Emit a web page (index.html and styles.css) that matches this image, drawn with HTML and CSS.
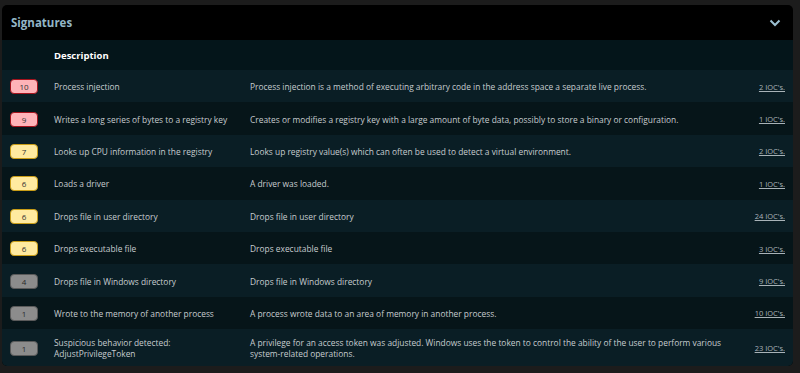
FILE: index.html
```html
<!DOCTYPE html>
<html lang="en">
<head>
    <meta charset="UTF-8">
    <title>Signatures</title>
    <link rel="stylesheet" href="styles.css">
</head>
<body>
    <div class="card">
        <div class="card-header">
            <h2>Signatures</h2>
            <svg class="chevron" width="12" height="8" viewBox="0 0 12 8">
                <path d="M1.5 1.5 L6 6 L10.5 1.5" fill="none" stroke="#9cc0d2" stroke-width="2"/>
            </svg>
        </div>
        <table class="sig-table">
            <colgroup>
                <col class="col-score">
                <col class="col-name">
                <col class="col-desc">
                <col class="col-ioc">
            </colgroup>
            <thead>
                <tr>
                    <th></th>
                    <th>Description</th>
                    <th></th>
                    <th></th>
                </tr>
            </thead>
            <tbody>
                <tr>
                    <td><span class="badge red">10</span></td>
                    <td>Process injection</td>
                    <td>Process injection is a method of executing arbitrary code in the address space a separate live process.</td>
                    <td class="ioc"><a href="#">2 IOC's.</a></td>
                </tr>
                <tr>
                    <td><span class="badge red">9</span></td>
                    <td>Writes a long series of bytes to a registry key</td>
                    <td>Creates or modifies a registry key with a large amount of byte data, possibly to store a binary or configuration.</td>
                    <td class="ioc"><a href="#">1 IOC's.</a></td>
                </tr>
                <tr>
                    <td><span class="badge yellow">7</span></td>
                    <td>Looks up CPU information in the registry</td>
                    <td>Looks up registry value(s) which can often be used to detect a virtual environment.</td>
                    <td class="ioc"><a href="#">2 IOC's.</a></td>
                </tr>
                <tr>
                    <td><span class="badge yellow">6</span></td>
                    <td>Loads a driver</td>
                    <td>A driver was loaded.</td>
                    <td class="ioc"><a href="#">1 IOC's.</a></td>
                </tr>
                <tr>
                    <td><span class="badge yellow">6</span></td>
                    <td>Drops file in user directory</td>
                    <td>Drops file in user directory</td>
                    <td class="ioc"><a href="#">24 IOC's.</a></td>
                </tr>
                <tr>
                    <td><span class="badge yellow">6</span></td>
                    <td>Drops executable file</td>
                    <td>Drops executable file</td>
                    <td class="ioc"><a href="#">3 IOC's.</a></td>
                </tr>
                <tr>
                    <td><span class="badge gray">4</span></td>
                    <td>Drops file in Windows directory</td>
                    <td>Drops file in Windows directory</td>
                    <td class="ioc"><a href="#">9 IOC's.</a></td>
                </tr>
                <tr>
                    <td><span class="badge gray">1</span></td>
                    <td>Wrote to the memory of another process</td>
                    <td>A process wrote data to an area of memory in another process.</td>
                    <td class="ioc"><a href="#">10 IOC's.</a></td>
                </tr>
                <tr>
                    <td><span class="badge gray">1</span></td>
                    <td>Suspicious behavior detected: AdjustPrivilegeToken</td>
                    <td>A privilege for an access token was adjusted. Windows uses the token to control the ability of the user to perform various system-related operations.</td>
                    <td class="ioc"><a href="#">23 IOC's.</a></td>
                </tr>
            </tbody>
        </table>
    </div>
</body>
</html>
```

FILE: styles.css
```css
body {
    margin: 0;
    padding: 5px 0 0 2px;
    background-color: #1c1c1c;
    font-family: "Open Sans", "Noto Sans", sans-serif;
    font-size: 8.4px;
    color: #c6cccf;
}
.card {
    width: 791px;
    background-color: #000;
    border-radius: 5px;
    overflow: hidden;
}
.card-header {
    display: flex;
    align-items: center;
    justify-content: space-between;
    height: 35px;
    padding: 0 12px 0 9px;
}
.card-header h2 {
    margin: 0;
    font-size: 11.5px;
    font-weight: bold;
    color: #93b6c7;
}
.chevron {
    display: block;
}
.sig-table {
    width: 100%;
    border-collapse: collapse;
    table-layout: fixed;
}
.col-score { width: 52px; }
.col-name { width: 196px; }
.col-desc { width: 492px; }
.sig-table th {
    height: 30px;
    background-color: #04151a;
    color: #fff;
    font-weight: bold;
    font-size: 9.5px;
    text-align: left;
    padding: 0;
}
.sig-table td {
    height: 32.4px;
    box-sizing: border-box;
    padding: 1px 0 0 0;
    vertical-align: middle;
    line-height: 11px;
}
.sig-table td:first-child {
    padding-left: 8px;
}
.sig-table tbody tr:nth-child(odd) {
    background-color: #0a1e25;
}
.sig-table tbody tr:nth-child(even) {
    background-color: #061519;
}
.sig-table tbody tr:last-child td {
    height: 37px;
}
.badge {
    display: block;
    width: 26px;
    height: 13px;
    line-height: 13px;
    border-radius: 4px;
    text-align: center;
    font-size: 8px;
    color: #333;
}
.badge.red {
    background-color: #ffb3b8;
    border: 1px solid #a4121c;
}
.badge.yellow {
    background-color: #ffeaa0;
    border: 1px solid #c89c16;
}
.badge.gray {
    background-color: #8c8c8c;
    border: 1px solid #5a5a5a;
    color: #2a2a2a;
}
.ioc {
    text-align: right;
    padding-right: 8px !important;
}
.ioc a {
    color: #a9b3b8;
    font-size: 7.5px;
    text-decoration: underline;
}
```
